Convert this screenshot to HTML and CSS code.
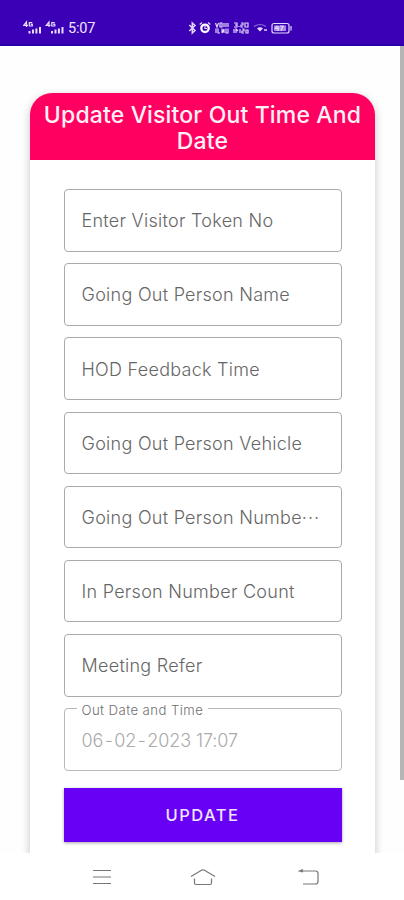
FILE: index.html
```html
<!DOCTYPE html>
<html lang="en">
<head>
<meta charset="utf-8">
<title>Update Visitor</title>
<link rel="stylesheet" href="styles.css">
</head>
<body>
<div class="phone">
  <header class="status">
    <div class="status-left">
      <svg class="signals" width="42" height="14" viewBox="0 0 42 14">
        <g id="signal" fill="none" stroke="#e8dcff" stroke-width="1.2">
          <path d="M3.5 7V2L.8 5.3H5M9.3 2.6H6.3V6H9.3V4.3H7.8"/>
          <path stroke-width="2" d="M6.5 13.5V11M10 13.5V9.5M13.4 13.5V8.5M17 13.5V7"/>
        </g>
        <use href="#signal" x="22.5"/>
      </svg>
      <span class="clock">5:07</span>
    </div>
    <div class="status-right">
      <svg width="105" height="14" viewBox="0 0 105 14" fill="none" stroke="#e3d6fb" stroke-width="1.2">
        <path stroke-width="1.5" d="M1.3 4L7 9.5L4.3 12V2L7 4.5L1.3 10"/>
        <circle cx="17" cy="7.3" r="3.7" stroke-width="2.3" stroke="#fff"/>
        <path d="M17 5V7.5H19M11.7 3.5L14 1.5M20 1.5L22.3 3.5"/>
        <path stroke-width="1.2" d="M27.5 2L29 6L30.5 2M32 2H34V6H32ZM36 2V6M38 2V6M40 2V6M28 7.5V12M30 7.5V12H32M34 7.5V12L36 8V12M38 7.5V12H40V7.5"/>
        <path stroke-width="1.2" d="M46 2H49V6H46M47 4H49M51 5V6M53 2H55V4H53V6H55M57 2H60V6H57ZM46 8V12M48 12V8L50 10M52 8V12M54 8H56V10H54V12H56M58 9H60V12H58Z"/>
        <path stroke="#8e68db" d="M66 5.5Q72 1.5 78 5.5"/>
        <path d="M69 7.5Q72 5 75 7.5L72 10.5Z" fill="#e3d6fb" stroke="none"/>
        <path stroke-width="1.5" d="M76 9H79"/>
        <rect x="84" y="2.5" width="17" height="9.5" rx="2"/>
        <rect x="86" y="4.5" width="12" height="5.5" fill="#a887e6" stroke="none"/>
        <path d="M89 4.8L87.5 7.5H91M90 5V10M92 5H95L93 10M103 5V9.5"/>
      </svg>
    </div>
  </header>
  <main class="content">
    <section class="card">
      <h1 class="title">Update Visitor Out Time And<br>Date</h1>
      <form class="form">
        <div class="field"><span>Enter Visitor Token No</span></div>
        <div class="field"><span>Going Out Person Name</span></div>
        <div class="field"><span>HOD Feedback Time</span></div>
        <div class="field"><span>Going Out Person Vehicle</span></div>
        <div class="field"><span>Going Out Person Numbe</span><span class="dots">···</span></div>
        <div class="field"><span>In Person Number Count</span></div>
        <div class="field"><span>Meeting Refer</span></div>
        <div class="field filled"><label class="label">Out Date and Time</label><span class="date">06<i>-</i>02<i>-</i>2023 17:07</span></div>
        <button class="update" type="button">UPDATE</button>
      </form>
    </section>
    <div class="scrollbar"></div>
  </main>
  <nav class="nav">
    <svg width="22" height="20" viewBox="0 0 22 20"><path d="M2 3.5H20M2 10H20M2 16.5H20"/></svg>
    <svg width="28" height="20" viewBox="0 0 28 20"><path d="M2 9.5L12.5 3.2Q14 2.5 15.5 3.2L26 9.5M5.5 11.5V16Q5.5 17.5 7 17.5H21Q22.5 17.5 22.5 16V11.5"/></svg>
    <svg width="22" height="20" viewBox="0 0 22 20"><path d="M1.5 4H17.5Q20 4 20 6.5V14.5Q20 17 17.5 17H5M5 2.5L1.5 4L5 5"/></svg>
  </nav>
</div>
</body>
</html>
```
FILE: styles.css
```css
* { box-sizing: border-box; }
body { margin: 0; background: #fff; font-family: Inter, Roboto, sans-serif; }
.phone { width: 404px; height: 900px; display: flex; flex-direction: column; overflow: hidden; }
.status { height: 46px; flex: none; background: #3b00b5; border-bottom: 2px solid #2900a9; display: flex; justify-content: space-between; padding: 20px 111px 0 23px; }
.status-left { display: flex; height: 16px; gap: 3px; }
.status-right { height: 16px; padding-top: 1px; }
.status svg { display: block; }
.clock { color: #eee5ff; font: 14.5px/17px Roboto, sans-serif; letter-spacing: -.2px; }
.content { height: 807px; flex: none; position: relative; overflow: hidden; padding: 46.5px 29px 0 30px; background: #fefefe; }
.card { height: 900px; border-radius: 22px 22px 0 0; background: #fff; box-shadow: 0 3px 10px rgba(0,0,0,.23); overflow: hidden; }
.title { margin: 0; height: 67.5px; padding-top: 9px; background: #ff0060; color: #fff0f6; text-align: center; white-space: nowrap; font-size: 23px; line-height: 26.5px; font-weight: 500; letter-spacing: .15px; }
.form { display: flex; flex-direction: column; gap: 11.7px; padding: 29px 33.5px 0 33.5px; }
.field { height: 62.5px; flex: none; border: 1px solid #aaa; border-radius: 4px; display: flex; align-items: center; padding: 1px 0 0 17px; color: #666; font-size: 18px; font-weight: 300; letter-spacing: .27px; white-space: nowrap; position: relative; }
.dots { letter-spacing: 1px; }
.filled { color: #aaa; border-color: #b8b8b8; letter-spacing: -.1px; }
.label { position: absolute; left: 12px; top: -7px; padding: 0 5px; background: #fff; color: #707070; font-size: 13.2px; line-height: 16px; font-weight: 300; letter-spacing: .42px; }
.date { padding-top: 1px; }
.date i { font-style: normal; display: inline-block; width: 11px; text-align: center; }
.update { height: 54px; margin: 5px 0 0; border: 0; padding: 0; background: #6800f5; color: #eee4ff; font: 500 16.5px Inter, sans-serif; letter-spacing: 1.5px; box-shadow: 0 1px 3px rgba(0,0,0,.35); }
.scrollbar { position: absolute; right: 0; top: 0; width: 4px; height: 734px; background: #b5b5b5; }
.nav { height: 47px; flex: none; background: #fff; display: flex; justify-content: space-between; padding: 14px 84px 0 91px; }
.nav svg { fill: none; stroke: #777; stroke-width: 1.2; }
.nav svg:nth-child(2) { margin-right: 6px; }
```
